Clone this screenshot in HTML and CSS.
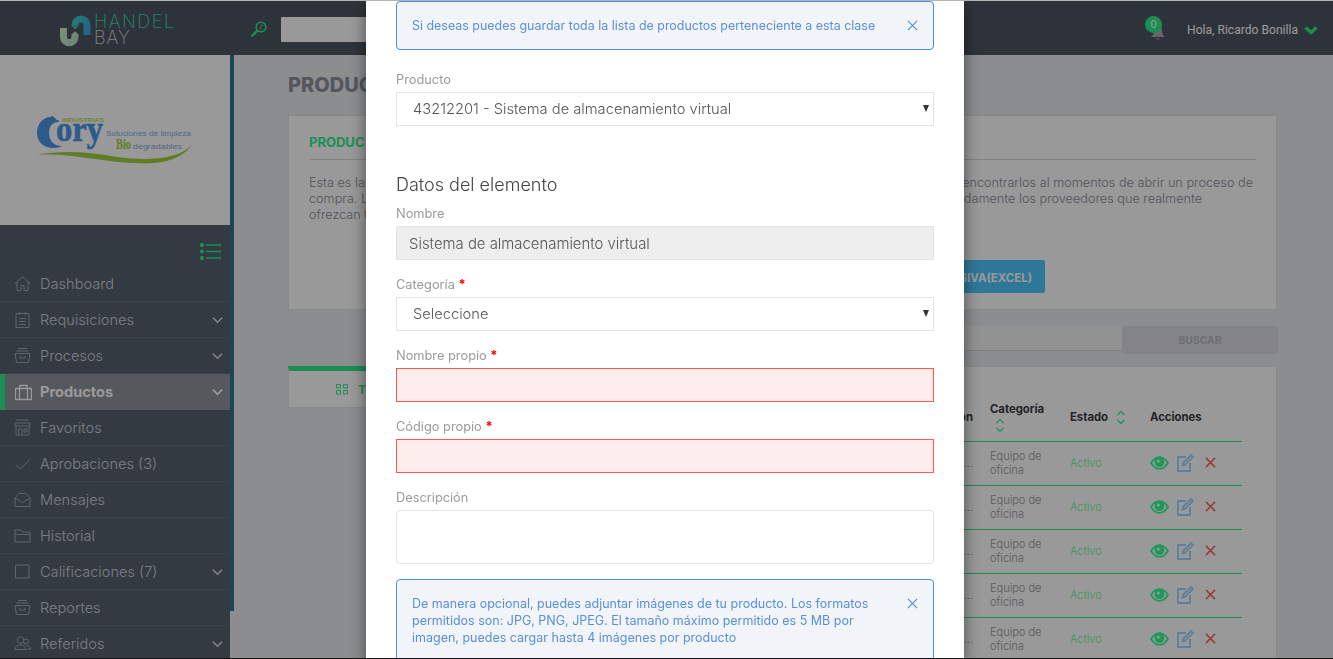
FILE: index.html
```html
<!DOCTYPE html>
<html lang="es">
<head>
<meta charset="utf-8">
<title>Handel Bay - Productos</title>
<link rel="stylesheet" href="styles.css">
</head>
<body>
<svg class="sprite" aria-hidden="true">
  <defs>
    <linearGradient id="lg1" gradientUnits="userSpaceOnUse" x1="0" y1="10" x2="20" y2="32"><stop offset="0" stop-color="#d8f0d0"/><stop offset="1" stop-color="#a8e0c0"/></linearGradient>
    <linearGradient id="lg2" gradientUnits="userSpaceOnUse" x1="13" y1="0" x2="32" y2="10"><stop offset="0" stop-color="#3fd8b0"/><stop offset="1" stop-color="#3aa8e8"/></linearGradient>
    <symbol id="i-home" viewBox="0 0 17 17"><path d="M1 8.500 8.500 1.500 16 8.500M3 7v8.500h4v-5h3v5h4V7"/></symbol>
    <symbol id="i-clip" viewBox="0 0 17 17"><path d="M2 2.500h13v14H2zM5.500 1v3M11.500 1v3M5 7.500h7M5 10.500h7M5 13.500h7"/></symbol>
    <symbol id="i-arch" viewBox="0 0 17 17"><path d="M4 1.500h9M2.500 4h12M1 6.500h15l-1.500 9h-12zM6 9v2h5V9"/></symbol>
    <symbol id="i-case" viewBox="0 0 17 17"><path d="M.5 4.500h16v11H.5zM5 4.500V1.500h7v3M4.500 4.500v11M12.500 4.500v11" stroke-width="1.300"/></symbol>
    <symbol id="i-store" viewBox="0 0 17 17"><path d="M2 1h13M1 4h15v3H1zM2 7v9h13V7M4.500 16v-6h3.500v6M10 10h3v3h-3z"/></symbol>
    <symbol id="i-check" viewBox="0 0 17 17"><path d="M2 9.500 6.500 14 15.500 4.500"/></symbol>
    <symbol id="i-mail" viewBox="0 0 17 17"><path d="M1 7 5 2.500h7L16 7v8.500H1zM1 7l7.500 4.500L16 7"/></symbol>
    <symbol id="i-fold" viewBox="0 0 17 17"><path d="M1 3h6l1.500 2H16v10H1zM1 7.500h15"/></symbol>
    <symbol id="i-box" viewBox="0 0 17 17"><path d="M1.500 2h13.500v13H1.500z"/></symbol>
    <symbol id="i-user" viewBox="0 0 17 17"><circle cx="6.500" cy="5" r="3.300"/><circle cx="12" cy="6.500" r="2.500"/><path d="M1 14.500c0-3 2.500-4.500 5.500-4.500s5.500 1.500 5.500 4.500zM12.500 10.500c2 0 4 1 4 3.500h-3"/></symbol>
    <symbol id="i-down" viewBox="0 0 12 8"><path d="M1 1.500 6 6.500 11 1.500"/></symbol>
    <symbol id="i-sort" viewBox="0 0 10 15"><path d="M1.500 5 5 1.500 8.500 5M1.500 10 5 13.500 8.500 10"/></symbol>
    <symbol id="i-eye" viewBox="0 0 20 14"><path fill-rule="evenodd" d="M0 7C2.500 2.500 6 0 10 0s7.500 2.500 10 7c-2.500 4.500-6 7-10 7S2.500 11.500 0 7zM2.200 7c2 3 4.700 5.200 7.800 5.200S15.800 10 17.800 7C16.700 5.300 15.400 4 14 3.100a5 5 0 1 1-8 0C4.600 4 3.300 5.300 2.200 7zM8.700 3.500a1.500 1.500 0 1 0 .1 3 1.500 1.500 0 0 0-.1-3z"/></symbol>
    <symbol id="i-edit" viewBox="0 0 17 18"><path d="M9 3H1v14h12V9"/><path d="M6 9 14 1l2 2-8 8-2.500.5z"/></symbol>
    <symbol id="i-x" viewBox="0 0 12 12"><path d="M1 1l10 10M11 1 1 11"/></symbol>
  </defs>
</svg>

<header class="topbar">
  <div class="brand">
    <svg class="brand-mark" viewBox="0 0 34 32">
      <path d="M5.500 13V22a5.750 5.750 0 0 0 11.500 0V20" fill="none" stroke="url(#lg1)" stroke-width="7"/>
      <path d="M13 20h8l-4-3.800z" fill="url(#lg1)"/>
      <path d="M17 10.500V10a6 6 0 0 1 12 0V20" fill="none" stroke="url(#lg2)" stroke-width="7"/>
      <path d="M13 10.500h8l-4 3.800z" fill="url(#lg2)"/>
    </svg>
    <div class="brand-text"><span class="brand-a">HANDEL</span><span class="brand-b">BAY</span></div>
  </div>
  <svg class="search-ic" viewBox="0 0 17 17"><circle cx="11" cy="6" r="4.800"/><path d="M7.500 9.500 1.500 15.500" stroke-width="2.400"/><path d="M11 3.500c1.500 0 1.500 2 0 2.500s-1 2.500.5 2.500" stroke-width="1"/></svg>
  <input class="top-search" type="text" aria-label="Buscar">
  <div class="top-user">
    <div class="bell">
      <svg viewBox="0 0 16 15"><path d="M8 1c3 0 4 2 4 5 0 3 1 4 3 6H1c2-2 3-3 3-6 0-3 1-5 4-5zM6.500 13.500h3v1h-3z"/></svg>
      <span class="bell-badge">0</span>
    </div>
    <span class="hello">Hola, Ricardo Bonilla</span>
    <svg class="hello-down" viewBox="0 0 14 10"><path d="M1.500 2.500 7 7.500 12.500 2.500"/></svg>
  </div>
</header>

<div class="shell">
  <aside class="side">
    <div class="side-logo">
      <svg class="cory" viewBox="0 0 156 48">
        <path class="c-blue" d="M14 1C5 1 0 9 0 17c0 9 7 15 17 15 3 0 6-1 8-2-9 0-13-6-13-13 0-6 3-11 9-11l2-1-3-1c-2-2-4-4-6-4z"/>
        <text class="c-ind" x="25" y="6" textLength="42" lengthAdjust="spacingAndGlyphs">INDUSTRIAS</text>
        <text class="c-ory" x="19" y="25" textLength="47" lengthAdjust="spacingAndGlyphs">ory</text>
        <text class="c-sol" x="69" y="20" textLength="85" lengthAdjust="spacingAndGlyphs">Soluciones de limpieza</text>
        <text class="c-bio" x="79" y="33" textLength="15" lengthAdjust="spacingAndGlyphs">Bio</text>
        <text class="c-deg" x="96" y="33" textLength="49" lengthAdjust="spacingAndGlyphs">degradables</text>
        <path class="c-green" d="M0 39C25 34 50 36 80 41c30 4 60 3 75-12-10 14-30 20-55 18C70 47 30 36 0 39z"/>
      </svg>
    </div>
    <nav class="menu">
      <div class="menu-top">
        <svg class="menu-toggle" viewBox="0 0 21 17"><path d="M6 2h15M6 8.500h15M6 15h15"/><circle cx="2" cy="2" r="1.400"/><circle cx="2" cy="8.500" r="1.400"/><circle cx="2" cy="15" r="1.400"/></svg>
      </div>
      <a class="item"><svg class="ic"><use href="#i-home"/></svg><span>Dashboard</span></a>
      <a class="item"><svg class="ic"><use href="#i-clip"/></svg><span>Requisiciones</span><svg class="chev"><use href="#i-down"/></svg></a>
      <a class="item"><svg class="ic"><use href="#i-arch"/></svg><span>Procesos</span><svg class="chev"><use href="#i-down"/></svg></a>
      <a class="item active"><svg class="ic"><use href="#i-case"/></svg><span>Productos</span><svg class="chev"><use href="#i-down"/></svg></a>
      <a class="item"><svg class="ic"><use href="#i-store"/></svg><span>Favoritos</span></a>
      <a class="item"><svg class="ic"><use href="#i-check"/></svg><span>Aprobaciones (3)</span></a>
      <a class="item"><svg class="ic"><use href="#i-mail"/></svg><span>Mensajes</span></a>
      <a class="item"><svg class="ic"><use href="#i-fold"/></svg><span>Historial</span></a>
      <a class="item"><svg class="ic"><use href="#i-box"/></svg><span>Calificaciones (7)</span><svg class="chev"><use href="#i-down"/></svg></a>
      <a class="item"><svg class="ic"><use href="#i-arch"/></svg><span>Reportes</span></a>
      <a class="item"><svg class="ic"><use href="#i-user"/></svg><span>Referidos</span><svg class="chev"><use href="#i-down"/></svg></a>
    </nav>
  </aside>
  <div class="side-stripe"></div>

  <main class="main">
    <h1 class="page-title">PRODUC</h1>
    <section class="intro">
      <h2 class="intro-title">PRODUC</h2>
      <p class="intro-line"><span>Esta es la</span><span>encontrarlos al momentos de abrir un proceso de</span></p>
      <p class="intro-line"><span>compra. L</span><span class="gap-a">damente los proveedores que realmente</span></p>
      <p class="intro-line"><span>ofrezcan t</span></p>
      <div class="intro-actions"><button class="btn-bulk">CARGA MASIVA(EXCEL)</button></div>
    </section>
    <div class="search-row">
      <input class="search-input" type="text" aria-label="Buscar producto">
      <button class="btn-search">BUSCAR</button>
    </div>
    <div class="content">
      <div class="tab">
        <svg class="tab-ic" viewBox="0 0 12 11"><path d="M.5.500h4v3.500h-4zM7.500.500h4v3.500h-4zM.5 6.500h4V10h-4zM7.500 6.500h4V10h-4z"/></svg>
        <span>Todos</span>
      </div>
      <section class="table-card">
        <table class="grid">
          <thead>
            <tr>
              <th class="col-desc">Descripción</th>
              <th class="col-cat">Categoría<br><svg class="sort"><use href="#i-sort"/></svg></th>
              <th class="col-est">Estado <svg class="sort sort-in"><use href="#i-sort"/></svg></th>
              <th class="col-act">Acciones</th>
            </tr>
          </thead>
          <tbody>
            <tr><td class="col-desc">virt...</td><td>Equipo de<br>oficina</td><td class="state">Activo</td><td><div class="acts"><svg class="a-eye"><use href="#i-eye"/></svg><svg class="a-edit"><use href="#i-edit"/></svg><svg class="a-x"><use href="#i-x"/></svg></div></td></tr>
            <tr><td class="col-desc">virt...</td><td>Equipo de<br>oficina</td><td class="state">Activo</td><td><div class="acts"><svg class="a-eye"><use href="#i-eye"/></svg><svg class="a-edit"><use href="#i-edit"/></svg><svg class="a-x"><use href="#i-x"/></svg></div></td></tr>
            <tr><td class="col-desc">virt...</td><td>Equipo de<br>oficina</td><td class="state">Activo</td><td><div class="acts"><svg class="a-eye"><use href="#i-eye"/></svg><svg class="a-edit"><use href="#i-edit"/></svg><svg class="a-x"><use href="#i-x"/></svg></div></td></tr>
            <tr><td class="col-desc">virt...</td><td>Equipo de<br>oficina</td><td class="state">Activo</td><td><div class="acts"><svg class="a-eye"><use href="#i-eye"/></svg><svg class="a-edit"><use href="#i-edit"/></svg><svg class="a-x"><use href="#i-x"/></svg></div></td></tr>
            <tr><td class="col-desc">virt...</td><td>Equipo de<br>oficina</td><td class="state">Activo</td><td><div class="acts"><svg class="a-eye"><use href="#i-eye"/></svg><svg class="a-edit"><use href="#i-edit"/></svg><svg class="a-x"><use href="#i-x"/></svg></div></td></tr>
          </tbody>
        </table>
      </section>
    </div>
  </main>
</div>

<div class="overlay">
  <div class="modal">
    <div class="alert alert-first">
      <p>Si deseas puedes guardar toda la lista de productos perteneciente a esta clase</p>
      <svg class="alert-x"><use href="#i-x"/></svg>
    </div>
    <div class="field field-product">
      <label>Producto</label>
      <div class="select-wrap"><select><option>43212201 - Sistema de almacenamiento virtual</option></select></div>
    </div>
    <h3 class="section-title">Datos del elemento</h3>
    <div class="field">
      <label>Nombre</label>
      <input class="ctl ctl-off" type="text" value="Sistema de almacenamiento virtual" readonly>
    </div>
    <div class="field">
      <label>Categoría <b>*</b></label>
      <div class="select-wrap"><select><option>Seleccione</option></select></div>
    </div>
    <div class="field">
      <label>Nombre propio <b>*</b></label>
      <input class="ctl ctl-err" type="text">
    </div>
    <div class="field">
      <label>Código propio <b>*</b></label>
      <input class="ctl ctl-err" type="text">
    </div>
    <div class="field field-last">
      <label>Descripción</label>
      <textarea class="ctl ctl-area"></textarea>
    </div>
    <div class="alert">
      <p>De manera opcional, puedes adjuntar imágenes de tu producto. Los formatos<br>permitidos son: JPG, PNG, JPEG. El tamaño máximo permitido es 5 MB por<br>imagen, puedes cargar hasta 4 imágenes por producto</p>
      <svg class="alert-x"><use href="#i-x"/></svg>
    </div>
  </div>
</div>
<div class="edge-top"></div>
<div class="edge-bottom"></div>
</body>
</html>
```

FILE: styles.css
```css
* { box-sizing: border-box; }
html, body { height: 100%; }
body {
  margin: 0;
  overflow: hidden;
  background: #e9ebee;
  font-family: "Inter", "Liberation Sans", sans-serif;
  color: #8e8e9e;
}
.sprite { position: absolute; width: 0; height: 0; }
p, h1, h2, h3 { margin: 0; }

/* top bar */
.topbar {
  height: 55px;
  display: flex;
  align-items: center;
  padding-left: 58px;
  padding-top: 4px;
  background: #4e5562;
}
.brand { display: flex; align-items: center; width: 192px; }
.brand-mark { width: 34px; height: 32px; margin-right: 2px; margin-top: 3px; }
.brand-text { display: flex; flex-direction: column; padding-top: 1px; font-weight: 200; font-size: 18px; line-height: 16px; }
.brand-a { color: #33e0b4; letter-spacing: 1.500px; }
.brand-b { color: #d6d8dc; letter-spacing: 1px; }
.search-ic { width: 17px; height: 17px; fill: none; stroke: #2bee8d; stroke-width: 1.600; margin-right: 14px; }
.top-search { width: 260px; height: 25px; border: 0; background: #fff; border-radius: 1px; }
.top-user { margin-left: auto; display: flex; align-items: center; padding-right: 15px; }
.bell { position: relative; width: 22px; height: 22px; margin-right: 20px; margin-top: -5px; }
.bell svg { position: absolute; left: 5px; top: 9px; width: 16px; height: 15px; fill: #a5a8ae; }
.bell-badge {
  position: absolute; left: 0; top: 0;
  width: 17px; height: 17px; border-radius: 50%;
  background: #2bee8d; color: #fff;
  font: 11px/17px "Liberation Sans", sans-serif; text-align: center;
}
.hello { font: 12.100px "Roboto", "Liberation Sans", sans-serif; color: #fff; white-space: nowrap; }
.hello-down { width: 14px; height: 10px; margin-left: 6px; fill: none; stroke: #2bee8d; stroke-width: 3.400; }

/* shell */
.shell { display: flex; height: 604px; align-items: flex-start; }
.side { width: 230px; flex: none; }
.side-stripe { width: 4px; height: 556px; flex: none; background: #2d7394; }
.side-logo { height: 170px; background: #fff; display: flex; align-items: center; justify-content: center; }
.cory { width: 156px; height: 48px; }
.c-blue { fill: #4a96ea; }
.c-ind { font: 700 6px "Liberation Sans", sans-serif; fill: #b6e050; }
.c-ory { font: 700 36px "Liberation Serif", serif; fill: #4a96ea; stroke: #4a96ea; stroke-width: .6; }
.c-sol { font: 8px "Liberation Sans", sans-serif; fill: #86aee0; }
.c-bio { font: 700 15px "Liberation Serif", serif; fill: #a5d038; }
.c-deg { font: 8px "Liberation Sans", sans-serif; fill: #86aee0; }
.c-green { fill: #a0d040; }

.menu { background: #57616e; height: 434px; overflow: hidden; }
.menu-top { height: 41px; display: flex; justify-content: flex-end; align-items: center; padding-right: 9px; padding-top: 12px; }
.menu-toggle { width: 21px; height: 17px; stroke: #2bee8d; stroke-width: 1.400; fill: #2bee8d; }
.item {
  height: 36px;
  display: flex; align-items: center;
  padding-left: 14px; padding-right: 7px;
  border-bottom: 1px solid #626c79;
  color: #cdd3dd;
  font-size: 14.600px; font-weight: 300;
}
.item span { flex: 1; margin-left: 9px; }
.ic { width: 17px; height: 17px; fill: none; stroke: #a0a9b6; stroke-width: 1; }
.chev { width: 11px; height: 8px; fill: none; stroke: #dce0e6; stroke-width: 1.600; }
.active { background: #8e939b; border-left: 5px solid #2bee8d; border-bottom: 0; padding-left: 10px; color: #fff; font-weight: 700; }
.active span { margin-left: 8px; }
.active .ic { stroke: #fff; }
.active .chev { stroke: #fff; stroke-width: 2; }

/* main */
.main { flex: 1; min-width: 0; padding: 18px 56px 0 54px; height: 604px; overflow: hidden; }
.page-title { font-size: 20px; line-height: 24px; font-weight: 800; color: #8e909c; margin-bottom: 18px; }
.intro { height: 195px; padding: 19px 20px 20px; background: #fff; border: 1px solid #e2e4e9; }
.intro-title { font-size: 13px; line-height: 15px; font-weight: 700; color: #2bee8d; padding-bottom: 9px; border-bottom: 1px solid #d8dade; margin-bottom: 15px; }
.intro-line { display: flex; justify-content: space-between; padding-right: 3px; font-size: 12.700px; font-weight: 300; line-height: 16px; color: #8a8a9a; white-space: nowrap; }
.gap-a { margin-right: 51px; }
.intro-actions { display: flex; justify-content: flex-end; margin-top: 37px; padding-right: 211px; }
.btn-bulk { height: 33px; width: 180px; border: 0; border-radius: 2px; background: #4fc7ff; color: #fff; font: 700 11.500px "Inter", sans-serif; padding: 2px 13px 0 0; text-align: right; }
.search-row { display: flex; margin: 16px -1px 12px 100px; }
.search-input { flex: 1; height: 25px; border: 0; border-bottom: 1px solid #d5d8de; background: #f3f4f6; }
.btn-search { width: 156px; height: 28px; border: 0; border-radius: 2px; background: #dcdde0; color: #b6b8bc; font: 700 10.300px "Inter", sans-serif; }
.content { display: flex; align-items: flex-start; }
.tab { width: 130px; height: 42px; flex: none; display: flex; align-items: center; padding-left: 47px; gap: 10px; background: #fff; border: 1px solid #e2e4e9; border-top: 5px solid #2bee8d; color: #2bee8d; font-size: 12px; font-weight: 700; }
.tab-ic { width: 12px; height: 11px; fill: none; stroke: #2bee8d; stroke-width: 1; }
.table-card { flex: 1; min-width: 0; height: 400px; padding: 26px 34px 0 10px; background: #fff; border: 1px solid #e2e4e9; }
.grid { width: 100%; table-layout: fixed; border-collapse: separate; border-spacing: 0; font-size: 11px; color: #96969e; }
.grid th { height: 48px; padding: 0; text-align: left; vertical-align: middle; font-size: 11.300px; line-height: 16px; font-weight: 700; color: #3a3a42; }
.grid td { height: 44px; padding: 0 0 2px; border-top: 1px solid #2bee8d; font-weight: 300; line-height: 14px; vertical-align: middle; }
.grid .col-desc { padding-right: 17px; text-align: right; white-space: nowrap; overflow: hidden; }
.col-cat { width: 80px; }
.col-est { width: 80px; }
.col-act { width: 92px; }
.state { color: #64fa96; }
.sort { width: 10px; height: 15px; fill: none; stroke: #2bee8d; stroke-width: 1.200; vertical-align: middle; margin-left: 5px; }
.sort-in { margin-left: 5px; }
.acts { display: flex; align-items: center; }
.a-eye { width: 19px; height: 14px; fill: #32ff96; }
.a-edit { width: 17px; height: 18px; margin-left: 8px; fill: none; stroke: #9ed2ff; stroke-width: 1.800; }
.a-x { width: 11px; height: 11px; margin-left: 11px; fill: none; stroke: #ff6464; stroke-width: 1.700; }

/* overlay + modal */
.overlay { position: fixed; inset: 0; background: rgba(0,0,0,.4); }
.modal {
  position: absolute; left: 366px; top: 0;
  width: 598px; height: 100%;
  padding: 1px 30px 0;
  overflow: hidden;
  background: #fff;
  box-shadow: 0 5px 15px rgba(0,0,0,.5);
}
.alert {
  display: flex; justify-content: space-between;
  padding: 15px 15px;
  border: 1px solid #4a8fd8;
  border-radius: 4px;
  background: #f1f5f9;
  color: #5a8fd8;
  font-size: 12.500px; line-height: 17px;
}
.alert-first { margin-bottom: 21px; font-size: 12.450px; }
.alert-x { width: 11px; height: 11px; margin-top: 3px; flex: none; fill: none; stroke: #4a8fd8; stroke-width: 1.200; }
.field { margin-bottom: 16px; }
.field-product { margin-bottom: 48px; }
.field-last { margin-bottom: 15px; }
.field label { display: block; height: 16px; margin-bottom: 5px; padding-top: 1px; font-size: 12.800px; line-height: 16px; color: #9a9a9a; }
.field label b { color: #f00; font-weight: 700; }
.section-title { height: 22px; margin-bottom: 9px; font-size: 18px; line-height: 22px; font-weight: 300; color: #444; }
.select-wrap { position: relative; }
.select-wrap::after {
  content: ""; position: absolute; right: 5px; top: 13px;
  border-left: 3.500px solid transparent; border-right: 3.500px solid transparent; border-top: 7px solid #333;
}
.select-wrap select {
  display: block; width: 100%; height: 34px;
  padding: 0 16px;
  appearance: none; -webkit-appearance: none;
  border: 1px solid #dde6ee; border-radius: 0;
  background: #fff; color: #555;
  font: 300 14.700px "Inter", sans-serif;
}
.ctl { display: block; width: 100%; height: 34px; padding: 2px 12px 0; border: 1px solid #e4e4e4; border-radius: 0; background: #fff; color: #555; font: 300 14.900px "Inter", sans-serif; }
.ctl-off { background: #eee; }
.ctl-err { border-color: #ff5a50; background: #fdeeed; }
.ctl-area { height: 54px; border-radius: 4px; resize: none; }

.edge-top { position: fixed; left: 0; right: 0; top: 0; height: 1px; background: #b4b4b4; }
.edge-bottom { position: fixed; left: 0; right: 0; bottom: 0; height: 1px; background: #111; }
```
